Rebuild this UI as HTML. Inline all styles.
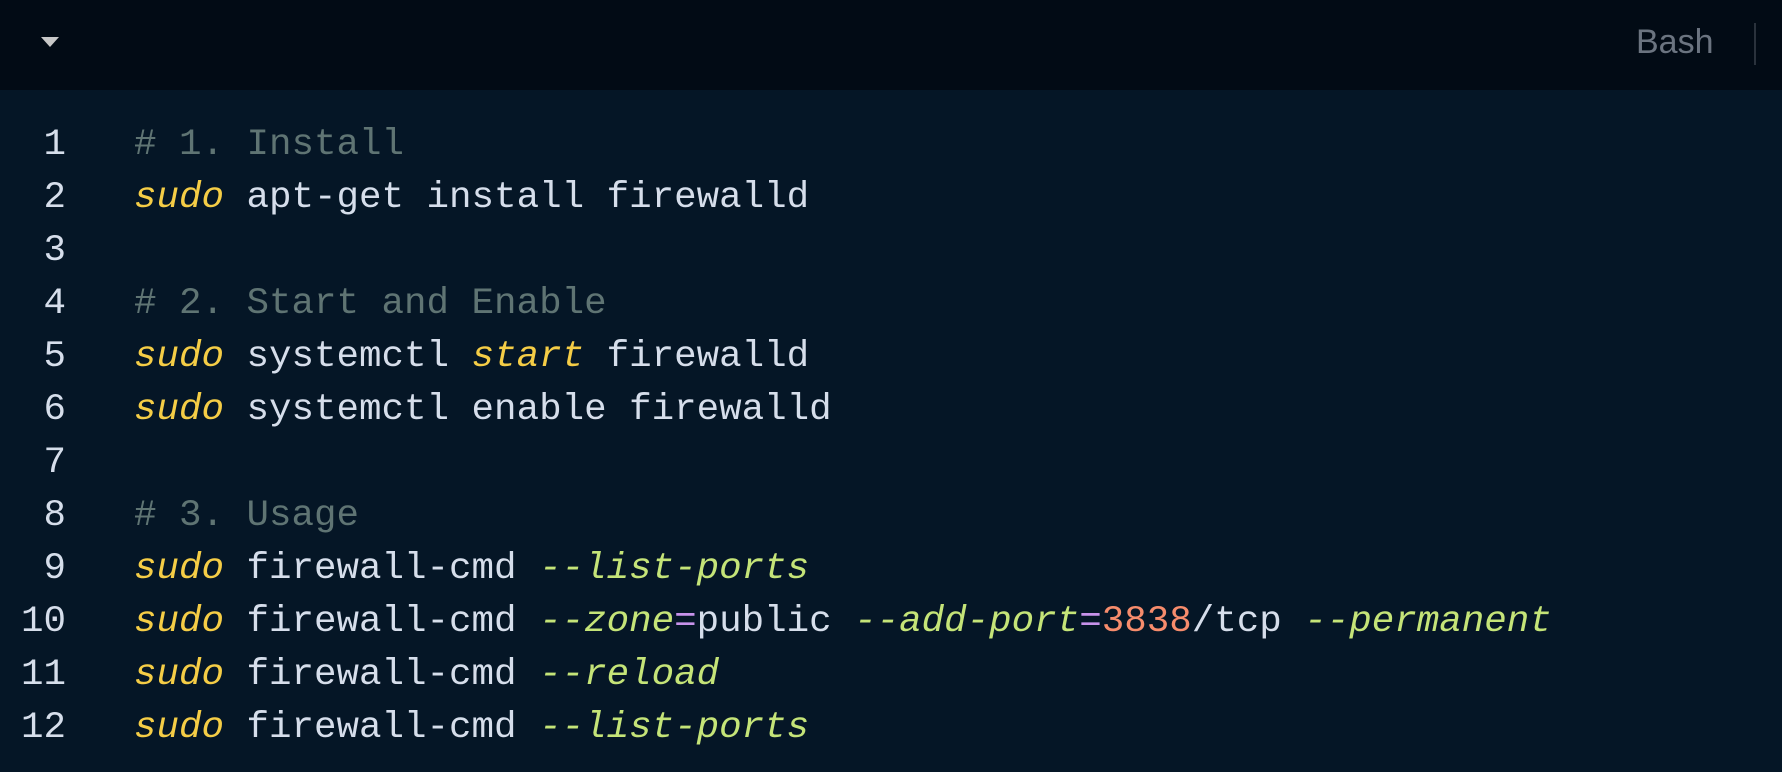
<!DOCTYPE html>
<html><head><meta charset="utf-8"><style>
html,body{margin:0;padding:0;width:1782px;height:772px;overflow:hidden;background:#051626;}
.hdr{position:absolute;left:0;top:0;width:1782px;height:90px;background:#020b15;}
.tri{position:absolute;left:41px;top:37px;width:0;height:0;border-left:9px solid transparent;border-right:9px solid transparent;border-top:10px solid #c8c8c8;}
.bash{position:absolute;left:1636px;top:23px;font:34px "Liberation Sans",sans-serif;color:#6b7480;}
.sep{position:absolute;left:1754px;top:23px;width:2px;height:42px;background:#2a323c;}
.code{position:absolute;left:0;top:119px;width:1782px;font-family:"Liberation Mono",monospace;font-size:37.5px;line-height:53px;color:#d6deeb;}
.row{position:relative;height:53px;}
.ln{position:absolute;left:0;width:66px;text-align:right;color:#d6deeb;}
.tx{position:absolute;left:134px;white-space:pre;}
.c{color:#5f7473}.y{color:#f5cd46;font-style:italic}.g{color:#c5e478;font-style:italic}.p{color:#c792ea}.o{color:#f78c6c}
</style></head><body>
<div class="hdr"><div class="tri"></div><div class="bash">Bash</div><div class="sep"></div></div>
<div class="code"><div class="row"><span class="ln">1</span><span class="tx"><span class="c"># 1. Install</span></span></div><div class="row"><span class="ln">2</span><span class="tx"><span class="y">sudo</span> apt-get install firewalld</span></div><div class="row"><span class="ln">3</span></div><div class="row"><span class="ln">4</span><span class="tx"><span class="c"># 2. Start and Enable</span></span></div><div class="row"><span class="ln">5</span><span class="tx"><span class="y">sudo</span> systemctl <span class="y">start</span> firewalld</span></div><div class="row"><span class="ln">6</span><span class="tx"><span class="y">sudo</span> systemctl enable firewalld</span></div><div class="row"><span class="ln">7</span></div><div class="row"><span class="ln">8</span><span class="tx"><span class="c"># 3. Usage</span></span></div><div class="row"><span class="ln">9</span><span class="tx"><span class="y">sudo</span> firewall-cmd <span class="g">--list-ports</span></span></div><div class="row"><span class="ln">10</span><span class="tx"><span class="y">sudo</span> firewall-cmd <span class="g">--zone</span><span class="p">=</span>public <span class="g">--add-port</span><span class="p">=</span><span class="o">3838</span>/tcp <span class="g">--permanent</span></span></div><div class="row"><span class="ln">11</span><span class="tx"><span class="y">sudo</span> firewall-cmd <span class="g">--reload</span></span></div><div class="row"><span class="ln">12</span><span class="tx"><span class="y">sudo</span> firewall-cmd <span class="g">--list-ports</span></span></div></div>
</body></html>
